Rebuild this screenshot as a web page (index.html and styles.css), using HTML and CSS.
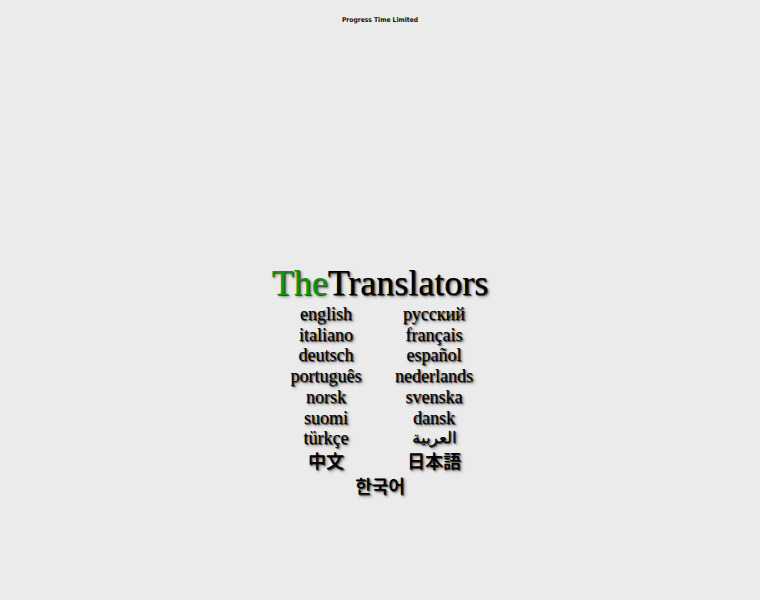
FILE: index.html
```html
<!DOCTYPE html>
<html>
<head>
<meta charset="utf-8">
<link rel="stylesheet" href="styles.css">
</head>
<body>
<div class="top">Progress Time Limited</div>
<div class="main">
  <div class="title"><span class="the">The</span>Translators</div>
  <table class="langs">
    <tr><td>english</td><td>русский</td></tr>
    <tr><td>italiano</td><td>français</td></tr>
    <tr><td>deutsch</td><td>español</td></tr>
    <tr><td>português</td><td>nederlands</td></tr>
    <tr><td>norsk</td><td>svenska</td></tr>
    <tr><td>suomi</td><td>dansk</td></tr>
    <tr><td>türkçe</td><td class="ar">العربية</td></tr>
    <tr class="cjk"><td>中文</td><td>日本語</td></tr>
    <tr class="cjk ko"><td colspan="2">한국어</td></tr>
  </table>
</div>
</body>
</html>
```
FILE: styles.css
```css
html, body {
  margin: 0;
  padding: 0;
  background: #ebebeb;
}
body {
  width: 760px;
  height: 600px;
  font-family: "Liberation Serif", serif;
  color: #000;
}
.top {
  font-family: "DejaVu Sans Condensed", "DejaVu Sans", sans-serif;
  font-weight: bold;
  font-size: 6.7px;
  text-align: center;
  padding-top: 16px;
  color: #111;
}
.main {
  margin-top: 238px;
  display: flex;
  flex-direction: column;
  align-items: center;
}
.title {
  font-size: 36px;
  line-height: 42px;
  text-shadow: 1px 1px 1px #333, 2px 2px 3px #888;
}
.the {
  color: #0a9a0a;
}
.langs {
  border-collapse: collapse;
  font-size: 18px;
  text-shadow: 1px 1px 1px #333, 2px 2px 3px #888;
}
.langs td {
  padding: 0;
  width: 108px;
  text-align: center;
  line-height: 20.7px;
}
.langs td.ar {
  font-size: 16px;
}
.cjk td {
  font-family: "Noto Sans CJK KR", "Noto Sans CJK JP", sans-serif;
  font-size: 18px;
  font-weight: 500;
  line-height: 23px;
}
.ko td {
  line-height: 26px;
}
```
